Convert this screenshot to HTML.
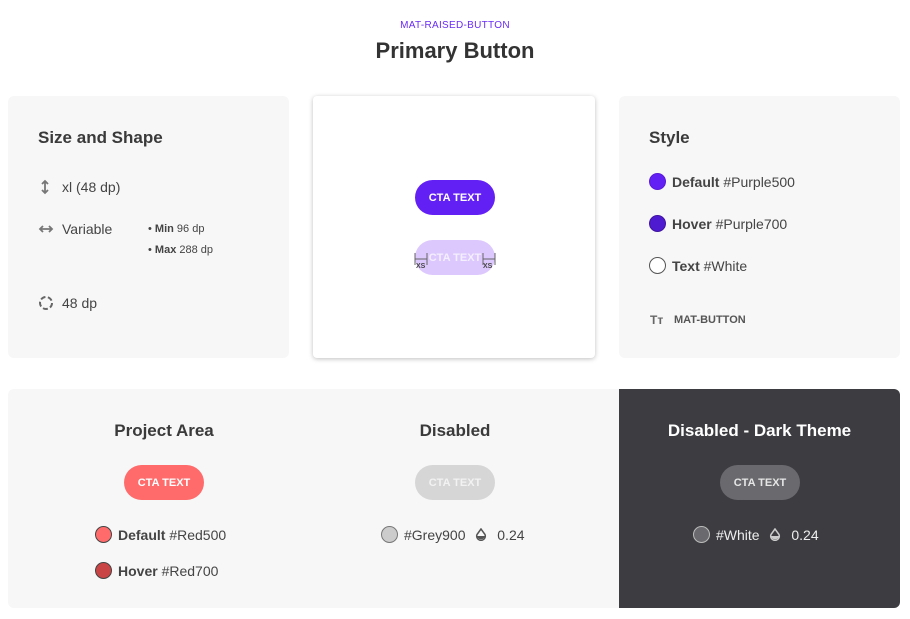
<!DOCTYPE html><html><head><style>
*{margin:0;padding:0;box-sizing:border-box}
body{width:910px;height:619px;background:#fff;font-family:"Liberation Sans",sans-serif;color:#444;position:relative;overflow:hidden}
.a{position:absolute}
.card{position:absolute;background:#f7f7f7;border-radius:6px}
h2{position:absolute;font-size:17px;font-weight:bold;color:#3a3a3a}
.t{position:absolute;font-size:14px;color:#444;white-space:nowrap}
.btn{position:absolute;width:80px;height:35px;border-radius:18px;font-size:11px;font-weight:bold;display:flex;align-items:center;justify-content:center;color:#fff}
.dot{display:inline-block;width:17px;height:17px;border-radius:50%;vertical-align:-3px;margin-right:6px}
</style></head><body>
<div class="a" style="left:0;width:910px;top:20px;text-align:center;font-size:10px;color:#6a2cf5;letter-spacing:.3px">MAT-RAISED-BUTTON</div>
<div class="a" style="left:0;width:910px;top:38px;text-align:center;font-size:22px;font-weight:bold;color:#333">Primary Button</div>

<div class="card" style="left:8px;top:96px;width:281px;height:262px"></div>
<h2 style="left:38px;top:128px">Size and Shape</h2>
<svg class="a" style="left:40px;top:179px" width="10" height="16"><path d="M5 2v12M2 5l3-3 3 3M2 11l3 3 3-3" fill="none" stroke="#777" stroke-width="1.8"/></svg>
<div class="t" style="left:62px;top:179px">xl (48 dp)</div>
<svg class="a" style="left:38px;top:224px" width="16" height="10"><path d="M2 5h12M5 2L2 5l3 3M11 2l3 3-3 3" fill="none" stroke="#777" stroke-width="1.8"/></svg>
<div class="t" style="left:62px;top:221px">Variable</div>
<div class="t" style="left:148px;top:223px;font-size:11px">• <b>Min</b> 96 dp</div>
<div class="t" style="left:148px;top:244px;font-size:11px">• <b>Max</b> 288 dp</div>
<svg class="a" style="left:38px;top:295px" width="16" height="16"><circle cx="8" cy="8" r="6" fill="none" stroke="#666" stroke-width="2" stroke-dasharray="5 2.5"/></svg>
<div class="t" style="left:62px;top:295px">48 dp</div>

<div class="a" style="left:313px;top:96px;width:282px;height:262px;background:#fff;border-radius:4px;box-shadow:0 1px 5px rgba(0,0,0,.25)"></div>
<div class="btn" style="left:415px;top:180px;background:#6320f5">CTA TEXT</div>
<div class="btn" style="left:415px;top:240px;background:#dcc8fd;color:#f4efff">CTA TEXT</div>
<svg class="a" style="left:414px;top:251px" width="82" height="20"><path d="M1 2v12M1 8h12M13 2v12M69 2v12M69 8h12M81 2v12" fill="none" stroke="#666" stroke-width="1"/></svg>
<div class="a" style="left:416px;top:263px;font-size:7px;font-weight:bold;color:#444">XS</div>
<div class="a" style="left:483px;top:263px;font-size:7px;font-weight:bold;color:#444">XS</div>

<div class="card" style="left:619px;top:96px;width:281px;height:262px"></div>
<h2 style="left:649px;top:128px">Style</h2>
<div class="t" style="left:649px;top:173px"><span class="dot" style="background:#6320f5;border:1px solid #5a1ad8"></span><b>Default</b> #Purple500</div>
<div class="t" style="left:649px;top:215px"><span class="dot" style="background:#4f1bd0;border:1px solid #40159f"></span><b>Hover</b> #Purple700</div>
<div class="t" style="left:649px;top:257px"><span class="dot" style="background:#fff;border:1.5px solid #555"></span><b>Text</b> #White</div>
<div class="t" style="left:650px;top:313px;font-size:12px;font-weight:bold;color:#666">Tт</div>
<div class="t" style="left:674px;top:314px;font-size:11px;font-weight:bold;color:#555">MAT-BUTTON</div>

<div class="card" style="left:8px;top:389px;width:892px;height:219px"></div>
<div class="a" style="left:619px;top:389px;width:281px;height:219px;background:#3d3c40;border-radius:0 6px 6px 0"></div>
<h2 style="left:0;width:328px;text-align:center;top:421px">Project Area</h2>
<h2 style="left:300px;width:310px;text-align:center;top:421px">Disabled</h2>
<h2 style="left:619px;width:281px;text-align:center;top:421px;color:#fff">Disabled - Dark Theme</h2>
<div class="btn" style="left:124px;top:465px;background:#ff6b6b">CTA TEXT</div>
<div class="btn" style="left:415px;top:465px;background:#d6d6d6;color:#f2f2f2">CTA TEXT</div>
<div class="btn" style="left:720px;top:465px;background:#6a696d;color:#e6e6e6">CTA TEXT</div>
<div class="t" style="left:95px;top:526px"><span class="dot" style="background:#ff6b6b;border:1.5px solid #444"></span><b>Default</b> #Red500</div>
<div class="t" style="left:95px;top:562px"><span class="dot" style="background:#c94444;border:1.5px solid #444"></span><b>Hover</b> #Red700</div>
<div class="t" style="left:381px;top:526px"><span class="dot" style="background:#ccc;border:1.5px solid #777"></span>#Grey900 <svg width="12" height="13" style="margin-left:6px;vertical-align:-1px"><path d="M6 1L2 6.5a4.3 4.3 0 1 0 8 0z" fill="none" stroke="#555" stroke-width="1.5"/><path d="M1.8 8h8.4a4.3 4.3 0 0 1-8.4 0z" fill="#555"/></svg> <span style="margin-left:6px">0.24</span></div>
<div class="t" style="left:693px;top:526px;color:#eee"><span class="dot" style="background:#6a696d;border:1.5px solid #bbb"></span>#White <svg width="12" height="13" style="margin-left:6px;vertical-align:-1px"><path d="M6 1L2 6.5a4.3 4.3 0 1 0 8 0z" fill="none" stroke="#ccc" stroke-width="1.5"/><path d="M1.8 8h8.4a4.3 4.3 0 0 1-8.4 0z" fill="#ccc"/></svg> <span style="margin-left:6px">0.24</span></div>
</body></html>
